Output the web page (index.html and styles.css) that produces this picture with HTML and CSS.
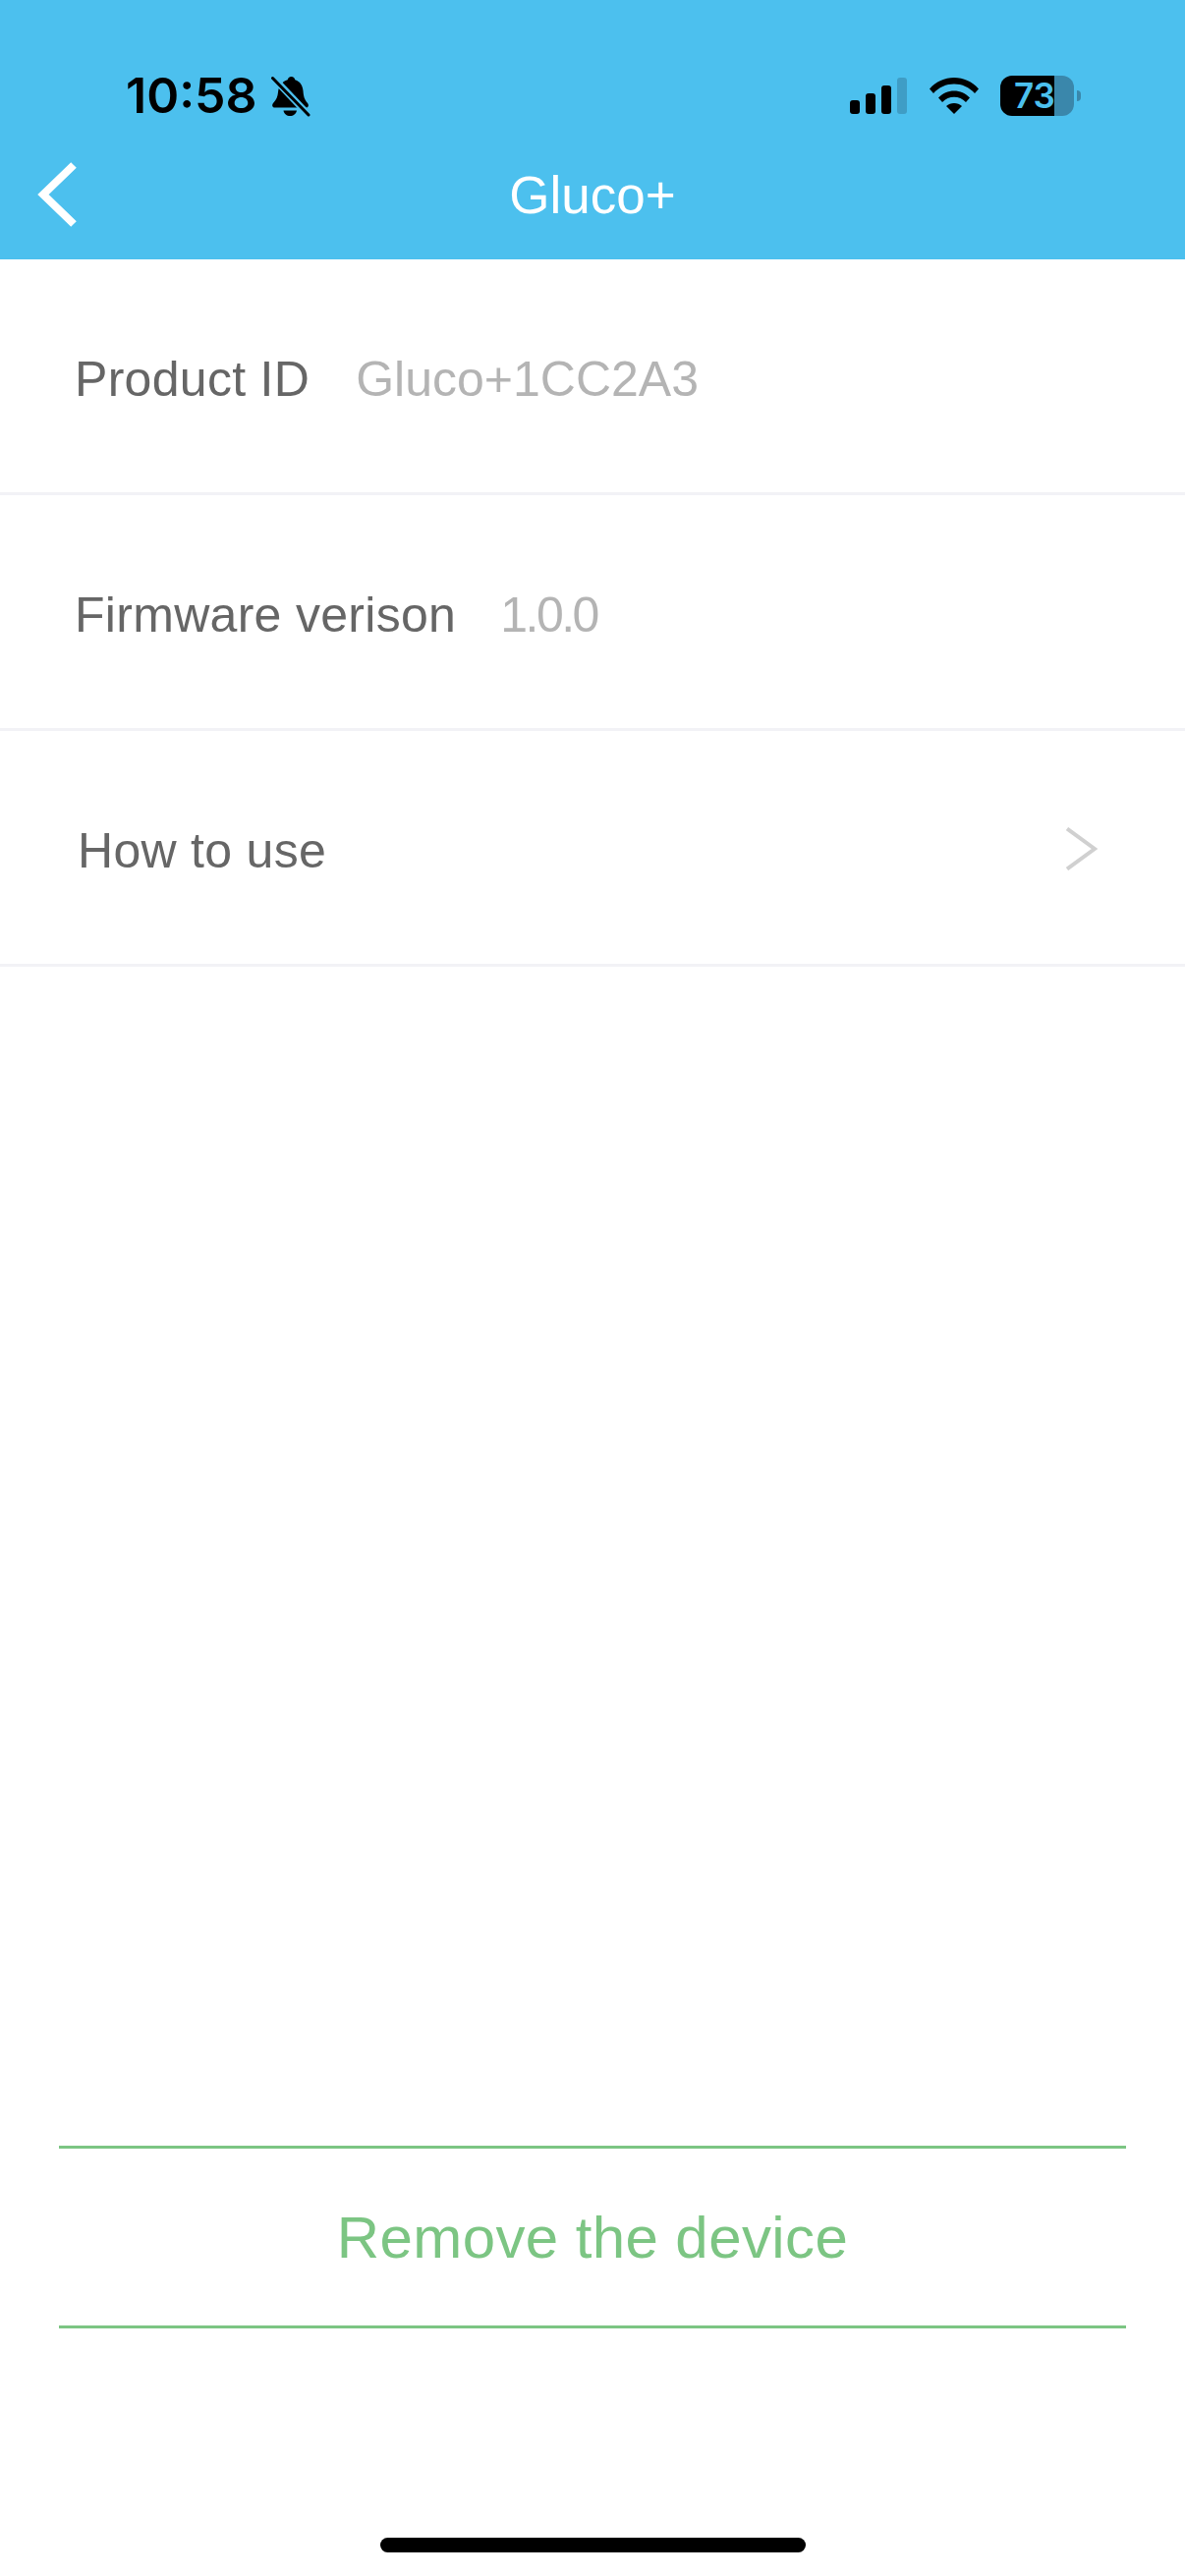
FILE: index.html
```html
<!DOCTYPE html>
<html>
<head>
  <title>Gluco+</title>
  <link rel="stylesheet" href="styles.css">
</head>
<body>

<div class="app">
  <!-- Blue top area: status bar + nav -->
  <header class="top">
    <div class="status">
      <div class="status-left">
        <span class="time">10:58</span>
        <svg class="bell" width="40" height="42" viewBox="0 0 40 42">
          <path d="M20.500 1c2 0 3.500 1.500 3.800 3.200C29.500 5.800 32 10 32.500 15.500c.4 5 1 8.500 4.500 12.500 1.500 1.800 1 4.500-1.500 4.500H3.500C1 32.500.5 29.800 2 28c3.500-3.500 4.500-7 5-11C7.500 11 11 5.800 16.700 4.200 17 2.500 18.500 1 20.500 1z" fill="#000"/>
          <path d="M12.500 35.500h13.500c-.5 3.500-3.500 5.500-6.800 5.500s-6.200-2-6.700-5.500z" fill="#000"/>
          <path d="M0 0 L40 42" stroke="#4cc0ee" stroke-width="7"/>
          <path d="M1.500 2.500 L38 40" stroke="#000" stroke-width="3" stroke-linecap="round"/>
        </svg>
      </div>
      <div class="status-right">
        <div class="signal">
          <i class="bar bar1"></i>
          <i class="bar bar2"></i>
          <i class="bar bar3"></i>
          <i class="bar bar4"></i>
        </div>
        <svg class="wifi" width="50" height="37" viewBox="0 0 50 37">
          <path d="M0 11.500C6.500 4 15.500 0 25 0s18.500 4 25 11.500l-4 4.500C40.500 9.800 33 6.500 25 6.500S9.500 9.800 4 16z" fill="#000"/>
          <path d="M9 20.500C13.300 16 19 13.500 25 13.500s11.700 2.500 16 7l-4 4.500c-3.300-3.300-7.500-5.200-12-5.200s-8.700 1.900-12 5.200z" fill="#000"/>
          <path d="M17 29c2.200-2 5-3 8-3s5.800 1 8 3l-8 8z" fill="#000"/>
        </svg>
        <div class="battery">
          <div class="battery-body">
            <span class="battery-num">73</span>
          </div>
          <i class="battery-nub"></i>
        </div>
      </div>
    </div>
    <nav class="nav">
      <svg class="back" width="40" height="66" viewBox="0 0 40 66">
        <path d="M37 3 L6 33 L37 63" fill="none" stroke="#fff" stroke-width="8"/>
      </svg>
      <span class="title">Gluco+</span>
      <span></span>
    </nav>
  </header>

  <div class="list">
    <div class="row">
      <span class="label">Product ID</span>
      <span class="value">Gluco+1CC2A3</span>
    </div>
    <div class="row">
      <span class="label">Firmware verison</span>
      <span class="value value-short">1.0.0</span>
    </div>
    <div class="row row-link">
      <span class="label">How to use</span>
      <svg class="arrow" width="32" height="44" viewBox="0 0 32 44">
        <path d="M1 1.500 L29 22 L1 42.500" fill="none" stroke="#d0d0d0" stroke-width="4"/>
      </svg>
    </div>
  </div>

  <div class="remove">Remove the device</div>

  <div class="home-wrap">
    <div class="home"></div>
  </div>
</div>

</body>
</html>
```

FILE: styles.css
```css
* {
  box-sizing: border-box;
}
html, body {
  margin: 0;
  padding: 0;
  background: #fff;
}
.app {
  width: 1206px;
  height: 2622px;
  display: flex;
  flex-direction: column;
  overflow: hidden;
  font-family: "Liberation Sans", Arial, sans-serif;
}

/* Top area */
.top {
  height: 264px;
  background: #4cc0ee;
  flex-shrink: 0;
}
.status {
  height: 130px;
  padding: 77px 106px 0 128px;
  display: flex;
  justify-content: space-between;
  align-items: flex-start;
}
.status-left {
  display: flex;
  align-items: center;
  height: 41px;
  gap: 14px;
}
.time {
  font-family: Inter, "Liberation Sans", sans-serif;
  font-size: 50px;
  font-weight: 600;
  color: #000;
  line-height: 41px;
}
.status-right {
  display: flex;
  align-items: center;
  height: 41px;
}
.signal {
  display: flex;
  align-items: flex-end;
  gap: 6px;
  height: 37px;
  margin-right: 23px;
}
.bar {
  display: block;
  width: 10px;
  background: #000;
  border-radius: 3px;
}
.bar1 { height: 14px; }
.bar2 { height: 21px; }
.bar3 { height: 29px; }
.bar4 { height: 37px; background: #3f9dc5; }
.wifi {
  margin-right: 22px;
}
.battery {
  display: flex;
  align-items: center;
  gap: 3px;
}
.battery-body {
  width: 75px;
  height: 41px;
  border-radius: 12px;
  background: linear-gradient(to right, #000 55px, #3a87ab 55px);
  padding-left: 14px;
}
.battery-num {
  font-family: Inter, "Liberation Sans", sans-serif;
  font-size: 35px;
  font-weight: 600;
  color: #4cc0ee;
  line-height: 41px;
  display: block;
}
.battery-nub {
  display: block;
  width: 4px;
  height: 11px;
  background: #3a87ab;
  border-radius: 0 6px 6px 0;
}
.nav {
  height: 134px;
  display: grid;
  grid-template-columns: 1fr auto 1fr;
  align-items: center;
}
.back {
  display: block;
  margin: 2px 0 0 38px;
}
.title {
  font-size: 53px;
  color: #fff;
  margin-top: 2px;
}

/* List rows */
.list {
  flex: 1;
}
.row {
  height: 240px;
  padding: 6px 78px 0 76px;
  display: flex;
  align-items: center;
  gap: 47px;
  border-bottom: 3px solid #f2f2f6;
  font-size: 50px;
}
.row-link {
  padding-left: 79px;
  justify-content: space-between;
}
.label {
  color: #666;
  letter-spacing: 0.3px;
}
.value {
  color: #b4b4b4;
}
.value-short {
  letter-spacing: -2.5px;
  margin-left: -2px;
}
.arrow {
  display: block;
  margin: -3px 11px 0 0;
}

/* Bottom button */
.remove {
  margin: 0 60px;
  height: 186px;
  display: flex;
  align-items: center;
  justify-content: center;
  border-top: 3px solid #7cc583;
  border-bottom: 3px solid #7cc583;
  color: #7cc583;
  font-size: 60px;
  letter-spacing: 0.4px;
  flex-shrink: 0;
}
.home-wrap {
  height: 252px;
  padding-top: 213px;
  flex-shrink: 0;
  display: flex;
  justify-content: center;
  align-items: flex-start;
}
.home {
  width: 433px;
  height: 15px;
  border-radius: 8px;
  background: #000;
}
```
